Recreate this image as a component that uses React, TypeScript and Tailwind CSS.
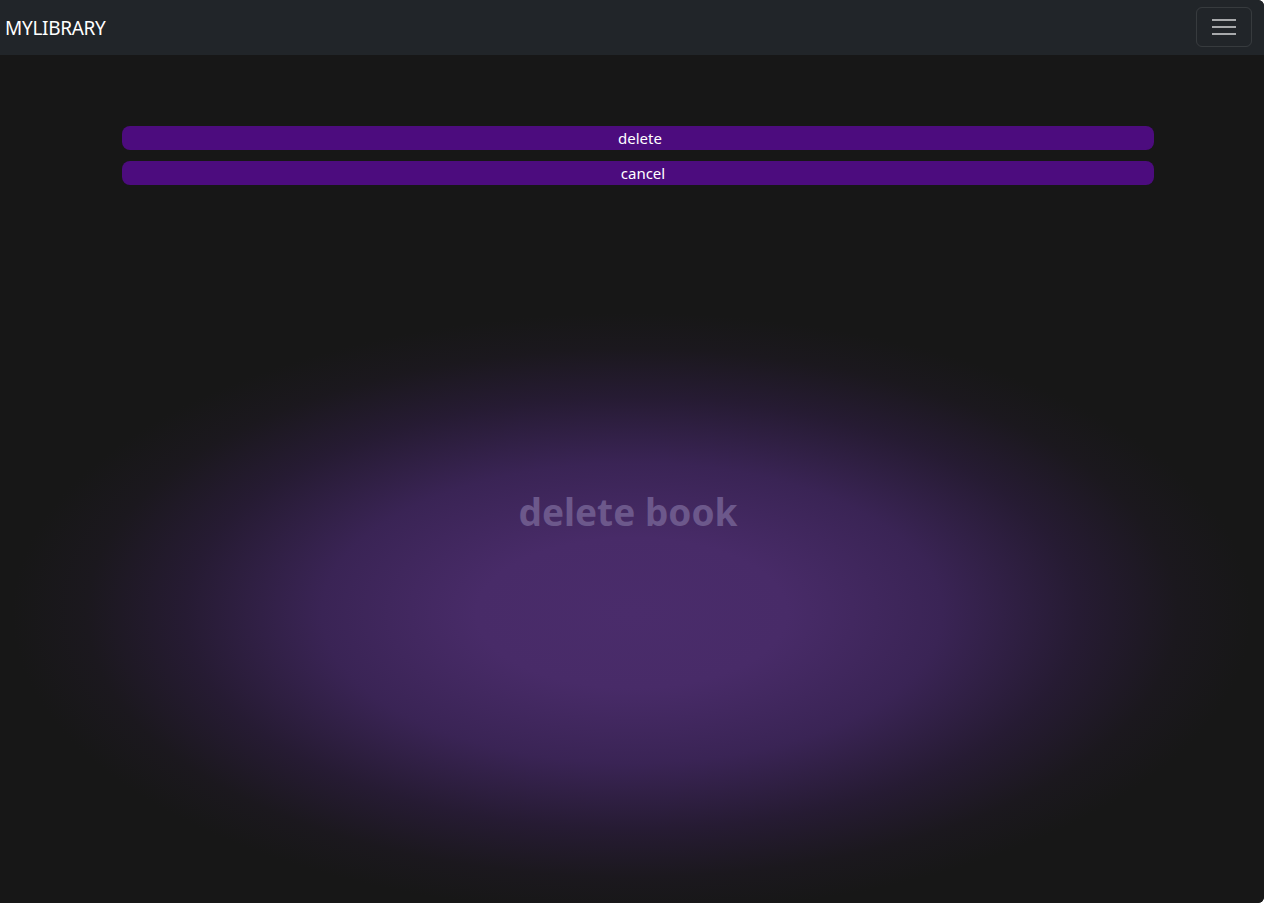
import React from 'react';

const App: React.FC = () => {
  return (
    <div className="w-[1266px] h-[903px] bg-white overflow-hidden">
      <div
        className="w-[1264px] h-[903px] rounded-r-[6px] overflow-hidden flex flex-col bg-[#171717]"
        style={{ fontFamily: '"Noto Sans", "Open Sans", sans-serif' }}
      >
        {/* Navbar */}
        <nav className="h-[55px] shrink-0 bg-[#212529] flex items-start justify-between pl-[5px] pr-[12px]">
          <span className="text-white text-[19px] tracking-[-0.3px] mt-[14px]">MYLIBRARY</span>
          <button className="mt-[7px] w-[56px] h-[40px] rounded-[6px] border border-white/10 flex items-center justify-center">
            <svg width="26" height="20" viewBox="0 0 26 20">
              <path d="M1 3h24M1 10h24M1 17h24" stroke="#a7a9ab" strokeWidth="2" />
            </svg>
          </button>
        </nav>

        {/* Main */}
        <main className="flex-1 flex flex-col bg-[radial-gradient(ellipse_620px_300px_at_632px_558px,#4a2c6b_0%,#482b68_25%,#3a2455_50%,#261b33_72%,#1b181e_88%,#171717_100%)]">
          <div className="ml-[122px] w-[1032px] mt-[71px] flex flex-col gap-[11px]">
            <button className="h-[24px] rounded-[8px] bg-[#4c0c7e] text-white text-[15px] leading-none pl-[4px]">
              delete
            </button>
            <button className="h-[24px] rounded-[8px] bg-[#4c0c7e] text-white text-[15px] leading-none pl-[10px]">
              cancel
            </button>
          </div>
          <h1 className="mt-[308px] text-center text-[37px] font-bold text-[#6c588b] leading-none pr-[8px]">
            delete book
          </h1>
        </main>
      </div>
    </div>
  );
};

export default App;
